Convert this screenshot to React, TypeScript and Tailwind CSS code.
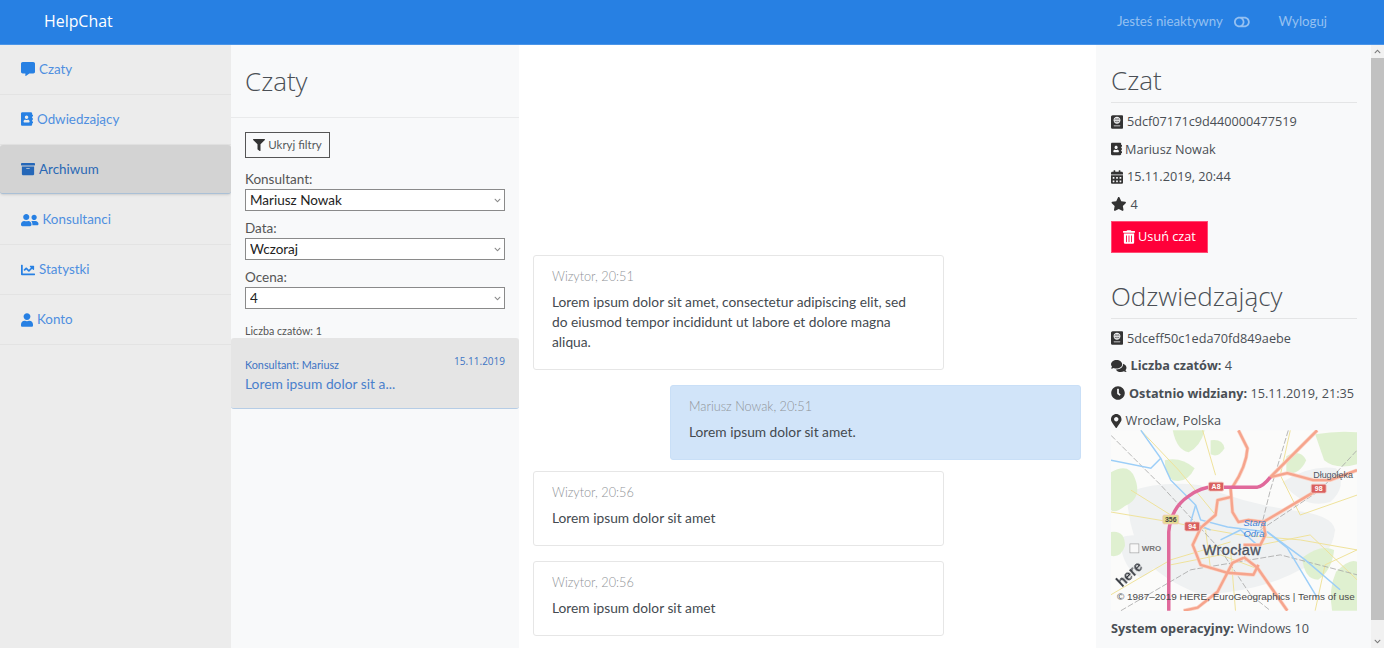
import { IconType } from 'react-icons';
import {
    FaAddressBook,
    FaArchive,
    FaCalendarAlt,
    FaChartLine,
    FaChevronDown,
    FaChevronUp,
    FaClock,
    FaCommentAlt,
    FaComments,
    FaFilter,
    FaMapMarkerAlt,
    FaPassport,
    FaStar,
    FaToggleOff,
    FaTrashAlt,
    FaUser,
    FaUserFriends,
} from 'react-icons/fa';

const menu: { label: string; icon: IconType; iconSize: string; active?: boolean; tall?: boolean }[] = [
    { label: 'Czaty', icon: FaCommentAlt, iconSize: 'w-[14px]' },
    { label: 'Odwiedzający', icon: FaAddressBook, iconSize: 'w-[12px]' },
    { label: 'Archiwum', icon: FaArchive, iconSize: 'w-[14px]', active: true },
    { label: 'Konsultanci', icon: FaUserFriends, iconSize: 'w-[17.5px]', tall: true },
    { label: 'Statystki', icon: FaChartLine, iconSize: 'w-[14px]' },
    { label: 'Konto', icon: FaUser, iconSize: 'w-[12px]' },
];

const filters = [
    { label: 'Konsultant:', value: 'Mariusz Nowak' },
    { label: 'Data:', value: 'Wczoraj' },
    { label: 'Ocena:', value: '4' },
];

const motorway = 'M58 181V102Q60 78 78 66Q92 56 105 57H147Q153 56 160 47';
const mainRoads = [
    'M128 0L137 18Q136 36 122 57',
    'M160 47L177 43L203 50H220L247 40',
    'M160 47L207 0',
    'M120 57L122 82L128 92L138 90L153 92L170 82L207 60',
    'M120 67L107 70L105 85L90 98L82 115L90 135L117 143L143 145L148 135',
    'M153 92L155 105L150 115L133 115',
    'M133 128L122 133L107 162L87 178L73 181',
    'M133 127L147 138L177 181',
];
const minorRoads = [
    'M0 82L60 92L90 98L130 105L190 110L247 120',
    'M30 0L68 40L105 85',
    'M92 0L105 45',
    'M0 165L60 130L120 112',
    'M205 181L215 135L247 120',
    'M180 0L170 45L190 85L247 65',
    'M120 120L125 181',
    'M150 115L200 105L247 150',
    'M95 100L100 140',
    'M60 135L110 125L150 140',
    'M20 60L60 85',
];
const railways = [
    'M0 5L50 55L110 120',
    'M10 181L80 140L170 125L247 145',
    'M178 0L160 60L150 100',
    'M150 100L210 60L247 20',
    'M110 120L140 165L160 181',
];
const rivers = [
    'M30 0L50 28L60 50L85 75L90 90L117 97L157 102L177 118L207 168',
    'M0 30L40 38L50 28',
    'M157 102L195 130L230 160',
    'M110 110L130 100L150 118',
    'M85 75L80 92L100 100',
];
const greens = [
    'M0 42Q18 32 24 48Q32 68 14 76Q4 84 0 80Z',
    'M62 0H94Q90 16 78 22Q66 20 62 0Z',
    'M54 30Q70 26 84 38Q76 54 62 50Q54 44 54 30Z',
    'M205 4Q228 0 247 2V34Q226 40 214 30Z',
    'M176 26Q190 18 196 30Q190 44 176 44Z',
    'M192 128Q210 114 224 120Q222 140 208 150Q194 150 192 128Z',
    'M226 142Q240 128 247 132V181H222Q218 160 226 142Z',
    'M0 102Q14 100 14 116Q10 128 0 126Z',
    'M100 10Q112 8 114 18Q108 28 100 24Z',
];
const city = [
    'M16 62Q50 50 90 55Q130 72 180 80Q222 84 225 100Q222 128 190 140Q150 162 90 165Q50 150 30 125Q16 92 16 62Z',
    'M172 52Q200 34 226 38Q238 56 220 72Q194 80 172 52Z',
    'M8 108Q30 100 46 116Q52 138 30 148Q12 140 8 108Z',
];

function MapSign({ x, y, w, text, fill, color }: { x: number; y: number; w: number; text: string; fill: string; color: string }) {
    return (
        <g>
            <rect x={x} y={y} width={w} height={9} rx={1.5} fill={fill} stroke="#f3c8c0" strokeWidth={0.8} />
            <text x={x + w / 2} y={y + 7.2} textAnchor="middle" fontSize={7} fontWeight={700} fontFamily="'Liberation Sans', sans-serif" fill={color}>
                {text}
            </text>
        </g>
    );
}

function CityMap() {
    return (
        <svg viewBox="0 0 247 181" className="block w-[246px] h-[181px] blur-[0.35px]">
            <rect width={247} height={181} fill="#fbfbfa" />
            {city.map((d, i) => <path key={i} d={d} fill="#eff1f2" />)}
            {greens.map((d, i) => <path key={i} d={d} fill="#dff0d0" />)}
            {minorRoads.map((d, i) => <path key={i} d={d} fill="none" stroke="#efe29a" strokeWidth={1} />)}
            {railways.map((d, i) => <path key={i} d={d} fill="none" stroke="#a6a6a6" strokeWidth={0.8} strokeDasharray="6 2" />)}
            {rivers.map((d, i) => <path key={i} d={d} fill="none" stroke="#9ccef8" strokeWidth={1.5} />)}
            {mainRoads.map((d, i) => <path key={i} d={d} fill="none" stroke="#fbd5c8" strokeWidth={3.8} strokeLinejoin="round" />)}
            {mainRoads.map((d, i) => <path key={i} d={d} fill="none" stroke="#f6a48c" strokeWidth={2.4} strokeLinejoin="round" />)}
            <path d={motorway} fill="none" stroke="#e0699b" strokeWidth={3.5} />
            <MapSign x={98} y={52} w={15} text="A8" fill="#d9605f" color="#fff" />
            <MapSign x={52} y={85} w={16} text="356" fill="#e5dc90" color="#444" />
            <MapSign x={74} y={92} w={15} text="94" fill="#d9605f" color="#fff" />
            <MapSign x={201} y={54} w={15} text="98" fill="#d9605f" color="#fff" />
            <rect x={19} y={114} width={9} height={9} fill="#f8f8f8" stroke="#999" strokeWidth={0.6} />
            <g fontFamily="'Liberation Sans', sans-serif">
                <text x={31} y={121} fontSize={8} fontWeight={700} fill="#777">WRO</text>
                <text x={203} y={48} fontSize={9} fill="#4f5560">Długołęka</text>
                <text x={133} y={96} fontSize={9.5} fontStyle="italic" fill="#3b82d8">Stara</text>
                <text x={133} y={107} fontSize={9.5} fontStyle="italic" fill="#3b82d8">Odra</text>
                <text x={92} y={125} fontSize={14.5} fill="#4d5260" stroke="#4d5260" strokeWidth={0.3} letterSpacing={0.5}>Wrocław</text>
                <text x={6} y={170} fontSize={10} fill="#4a4a4a">© 1987–2019 HERE, EuroGeographics | Terms of use</text>
                <text x={0} y={0} fontSize={14} fontWeight={700} fill="#33373e" transform="translate(11 158) rotate(-43)">here</text>
            </g>
        </svg>
    );
}

function Message({ meta, lines, own }: { meta: string; lines: string[]; own?: boolean }) {
    return (
        <div
            className={`w-[411px] rounded-[3px] border pt-[10px] px-[18px] pb-[17px] ${
                own ? 'self-end -mb-[4px] border-[#c9dff7] bg-[#d1e4f9]' : 'self-start border-[#e6e6e6] bg-white'
            }`}
        >
            <div className="text-[12.7px] leading-[20px] font-light text-[#8f9398]">{meta}</div>
            <div className="mt-[6px] text-[13.75px] leading-[20px] text-[#444a50]">
                {lines.map(line => (
                    <div key={line} className="whitespace-nowrap">{line}</div>
                ))}
            </div>
        </div>
    );
}

function DetailRow({ icon: Icon, size, gap = 'gap-[4px]', children }: { icon: IconType; size: string; gap?: string; children: React.ReactNode }) {
    return (
        <div className={`h-[27.5px] flex items-center whitespace-nowrap ${gap}`}>
            <Icon className={`h-[14px] shrink-0 text-[#333] ${size}`} />
            <span>{children}</span>
        </div>
    );
}

export default function App() {
    return (
        <div className="h-[648px] w-[1384px] overflow-hidden flex flex-col bg-white font-['Lato','Noto_Sans',sans-serif] text-[14px] text-[#373a3c]">
            {/* Navbar */}
            <header className="h-[45px] shrink-0 flex items-center justify-between bg-[#2780e3] border-b border-[#4b95e8] pl-[44px] pr-[57px]">
                <span className="text-[15.9px] font-['Open_Sans',sans-serif] text-white">HelpChat</span>
                <div className="flex items-center text-[13.25px] text-[#95c0f1]">
                    <span>Jesteś nieaktywny</span>
                    <FaToggleOff className="ml-[11px] h-[14px] w-[15.75px]" />
                    <span className="ml-[29px]">Wyloguj</span>
                </div>
            </header>

            <div className="flex flex-1 min-h-0">
                {/* Sidebar */}
                <nav className="w-[231px] shrink-0 bg-[#ececec]">
                    {menu.map((item, i) => (
                        <a
                            key={item.label}
                            className={`flex items-center gap-[4px] pl-[21px] text-[13.4px] ${i < 2 ? 'pb-[1px]' : ''} ${item.tall ? 'h-[51px] pt-[1px]' : item.active ? 'h-[49px]' : 'h-[50px]'} ${
                                item.active
                                    ? 'rounded-[3px] bg-[#d3d3d3] text-[#2a68b5] border-b border-[#aac0d6] shadow-sm'
                                    : 'text-[#4f8fe0] border-b border-[#e3e3e3]'
                            }`}
                        >
                            <item.icon className={`h-[14px] shrink-0 ${item.iconSize} ${item.active ? 'text-[#2567b8]' : 'text-[#2780e3]'}`} />
                            {item.label}
                        </a>
                    ))}
                </nav>

                {/* Chat list */}
                <section className="w-[288px] shrink-0 bg-[#f8f9fa]">
                    <h1 className="h-[73px] flex items-center px-[14px] font-['Open_Sans',sans-serif] text-[26px] font-light text-[#4a4f55] border-b border-[#e9eaeb]">Czaty</h1>
                    <div className="px-[14px]">
                        <button className="mt-[14px] h-[26px] w-[85px] flex items-center justify-center gap-[3px] border border-[#555] text-[11.5px] text-[#55595c]">
                            <FaFilter className="h-[12px] w-[12px] text-[#333]" />
                            Ukryj filtry
                        </button>
                        <div className="mt-[11px] flex flex-col gap-[7px]">
                            {filters.map(f => (
                                <label key={f.label} className="block">
                                    <span className="block text-[13.5px] leading-[20px] text-[#555]">{f.label}</span>
                                    <div className="relative">
                                        <select className="block appearance-none w-[260px] h-[22px] border border-[#8a8a8a] bg-white pl-[4px] text-[13.5px] text-[#222]">
                                            <option>{f.value}</option>
                                        </select>
                                        <FaChevronDown className="absolute right-[4px] top-[8px] text-[7px] text-[#8a8a8a]" />
                                    </div>
                                </label>
                            ))}
                        </div>
                        <div className="mt-[14px] text-[10.7px] leading-[15px] text-[#555]">Liczba czatów: 1</div>
                    </div>
                    <div className="relative h-[71px] rounded-[3px] bg-[#e5e5e5] border-b border-[#b6cde6] px-[14px] pt-[19px] text-[#3d74c4]">
                        <span className="absolute right-[14px] top-[16px] font-['Open_Sans',sans-serif] text-[10px]">15.11.2019</span>
                        <div className="text-[10.8px] leading-[16px]">Konsultant: Mariusz</div>
                        <div className="mt-[1px] text-[13.8px] leading-[20px] text-[#4a80cc]">Lorem ipsum dolor sit a...</div>
                    </div>
                </section>

                {/* Messages */}
                <main className="w-[577px] shrink-0 flex flex-col justify-end gap-[15px] pl-[14px] pr-[15px] pb-[12px]">
                    <Message
                        meta="Wizytor, 20:51"
                        lines={[
                            'Lorem ipsum dolor sit amet, consectetur adipiscing elit, sed',
                            'do eiusmod tempor incididunt ut labore et dolore magna',
                            'aliqua.',
                        ]}
                    />
                    <Message own meta="Mariusz Nowak, 20:51" lines={['Lorem ipsum dolor sit amet.']} />
                    <Message meta="Wizytor, 20:56" lines={['Lorem ipsum dolor sit amet']} />
                    <Message meta="Wizytor, 20:56" lines={['Lorem ipsum dolor sit amet']} />
                </main>

                {/* Details */}
                <aside className="w-[275px] shrink-0 bg-[#f8f9fa] pl-[15px] pr-[14px] font-['Open_Sans',sans-serif] text-[12.7px] text-[#4a4f55] overflow-hidden">
                    <h2 className="mt-[16px] h-[42px] pb-[2px] flex items-center text-[26px] font-light text-[#4a4f55] border-b border-[#e4e5e6]">Czat</h2>
                    <div className="mt-[5px] flex flex-col">
                        <DetailRow icon={FaPassport} size="w-[12px]">5dcf07171c9d440000477519</DetailRow>
                        <DetailRow icon={FaAddressBook} size="w-[11px]" gap="gap-[3px]">Mariusz Nowak</DetailRow>
                        <DetailRow icon={FaCalendarAlt} size="w-[12px]">15.11.2019, 20:44</DetailRow>
                        <DetailRow icon={FaStar} size="w-[15.5px]">4</DetailRow>
                    </div>
                    <button className="mt-[3px] h-[32px] w-[97px] flex items-center justify-center gap-[3px] bg-[#ff0039] text-white border border-[#ff4d74]">
                        <FaTrashAlt className="h-[14px] w-[12px]" />
                        Usuń czat
                    </button>

                    <h2 className="mt-[24px] h-[42px] pb-[2px] flex items-center text-[26px] font-light text-[#4a4f55] border-b border-[#e4e5e6]">Odzwiedzający</h2>
                    <div className="mt-[5.5px] flex flex-col">
                        <DetailRow icon={FaPassport} size="w-[12px]">5dceff50c1eda70fd849aebe</DetailRow>
                        <DetailRow icon={FaComments} size="w-[15.5px]"><b>Liczba czatów:</b> 4</DetailRow>
                        <DetailRow icon={FaClock} size="w-[14px]"><b>Ostatnio widziany:</b> 15.11.2019, 21:35</DetailRow>
                        <DetailRow icon={FaMapMarkerAlt} size="w-[10.5px]">Wrocław, Polska</DetailRow>
                    </div>
                    <div className="-mt-[4.5px]"><CityMap /></div>
                    <div className="mt-[7px] leading-[20px]"><b>System operacyjny:</b> Windows 10</div>
                </aside>

                {/* Scrollbar */}
                <div className="w-[13px] shrink-0 flex flex-col items-center bg-[#f1f1f1] text-[#7a7a7a]">
                    <div className="h-[13px] flex items-center"><FaChevronUp className="text-[7px]" /></div>
                    <div className="w-full h-[562px] bg-[#c1c1c1]" />
                    <div className="flex-1" />
                    <div className="h-[13px] flex items-center"><FaChevronDown className="text-[7px]" /></div>
                </div>
            </div>
        </div>
    );
}
